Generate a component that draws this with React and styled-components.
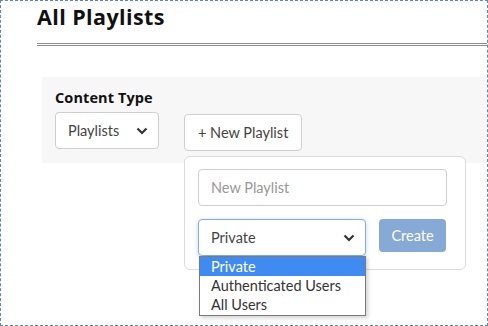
import React from "react";
import styled, { createGlobalStyle } from "styled-components";

const GlobalStyle = createGlobalStyle`
  html, body {
    margin: 0;
    padding: 0;
    background: #fff;
  }
  body {
    font-family: "Lato", "Open Sans", Arial, sans-serif;
    color: #333;
  }
`;

/* page frame */
const Frame = styled.div`
  width: 488px;
  height: 326px;
  box-sizing: border-box;
  border: 1px dashed #5f87b0;
  overflow: hidden;
  position: relative;
`;

const Content = styled.div`
  padding: 0 0 0 36px;
`;

const Title = styled.h1`
  margin: 0;
  padding-top: 2px;
  font-family: "Open Sans", Arial, sans-serif;
  font-size: 21.5px;
  line-height: 28px;
  font-weight: 700;
  color: #111;
  letter-spacing: 0.4px;
`;

const Rule = styled.div`
  margin-top: 12px;
  height: 1px;
  border-top: 1px solid #8c8c8c;
  border-bottom: 1px solid #8c8c8c;
`;

const Panel = styled.div`
  margin: 31px 0 0 5px;
  height: 86px;
  box-sizing: border-box;
  padding: 12px 13px 0;
  background: #f7f7f7;
  display: flex;
  align-items: flex-start;
  gap: 25px;
`;

const Field = styled.div`
  display: flex;
  flex-direction: column;
  gap: 5px;
`;

const Label = styled.label`
  font-family: "Open Sans", Arial, sans-serif;
  font-size: 14.5px;
  line-height: 18px;
  font-weight: 700;
  color: #111;
  letter-spacing: 0.1px;
`;

const SelectBox = styled.div`
  width: ${(p) => p.$width}px;
  height: 37px;
  box-sizing: border-box;
  border: 1px solid ${(p) => (p.$focus ? "#86acd9" : "#cfcfcf")};
  border-radius: 4px;
  background: #fff;
  display: flex;
  align-items: center;
  justify-content: space-between;
  padding: 0 10px 0 12px;
  font-size: 14.5px;
  color: #444;
  box-shadow: ${(p) =>
    p.$focus ? "0 1px 5px rgba(90, 140, 200, 0.35)" : "none"};
`;

const Chevron = () => (
  <svg width="12" height="8" viewBox="0 0 12 8">
    <polyline
      points="1.5,1.5 6,6 10.5,1.5"
      fill="none"
      stroke="#333"
      strokeWidth="2.2"
    />
  </svg>
);

const Anchor = styled.div`
  position: relative;
  margin-top: 25px;
`;

const Button = styled.button`
  height: 37px;
  box-sizing: border-box;
  padding: 0 13px;
  border: 1px solid #cfcfcf;
  border-radius: 4px;
  background: #fff;
  font-family: inherit;
  font-size: 14.5px;
  color: #444;
`;

const Popover = styled.div`
  position: absolute;
  left: 0;
  top: 42px;
  width: 282px;
  height: 114px;
  box-sizing: border-box;
  border: 1px solid #dcdcdc;
  border-radius: 6px;
  background: #fff;
  padding: 12px 18px 0 13px;
  display: flex;
  flex-direction: column;
  gap: 13px;
`;

const Input = styled.div`
  height: 37px;
  box-sizing: border-box;
  border: 1px solid #cfcfcf;
  border-radius: 4px;
  padding: 0 12px;
  display: flex;
  align-items: center;
  font-size: 14.5px;
  color: #999;
`;

const Row = styled.div`
  display: flex;
  align-items: flex-start;
  gap: 13px;
  position: relative;
`;

const CreateButton = styled.button`
  width: 67px;
  height: 33px;
  border: none;
  border-radius: 4px;
  background: #87a9d6;
  color: #fff;
  font-family: inherit;
  font-size: 14.5px;
  padding: 0;
`;

const Options = styled.ul`
  position: absolute;
  left: 1px;
  top: 37px;
  width: 167px;
  box-sizing: border-box;
  margin: 0;
  padding: 0 0 1px;
  list-style: none;
  background: #fff;
  border: 1px solid #7a7a7a;
  box-shadow: 2px 2px 4px rgba(0, 0, 0, 0.18);
`;

const Option = styled.li`
  height: 19px;
  line-height: 19px;
  padding: 0 11px;
  font-size: 14.5px;
  color: ${(p) => (p.$active ? "#fff" : "#333")};
  background: ${(p) => (p.$active ? "#3f8bf2" : "transparent")};
`;

function App() {
  return (
    <Frame>
      <GlobalStyle />
      <Content>
        <Title>All Playlists</Title>
        <Rule />
        <Panel>
          <Field>
            <Label>Content Type</Label>
            <SelectBox $width={104}>
              Playlists
              <Chevron />
            </SelectBox>
          </Field>
          <Anchor>
            <Button>+ New Playlist</Button>
            <Popover>
              <Input>New Playlist</Input>
              <Row>
                <SelectBox $width={168} $focus>
                  Private
                  <Chevron />
                </SelectBox>
                <CreateButton>Create</CreateButton>
                <Options>
                  <Option $active>Private</Option>
                  <Option>Authenticated Users</Option>
                  <Option>All Users</Option>
                </Options>
              </Row>
            </Popover>
          </Anchor>
        </Panel>
      </Content>
    </Frame>
  );
}

export default App;
